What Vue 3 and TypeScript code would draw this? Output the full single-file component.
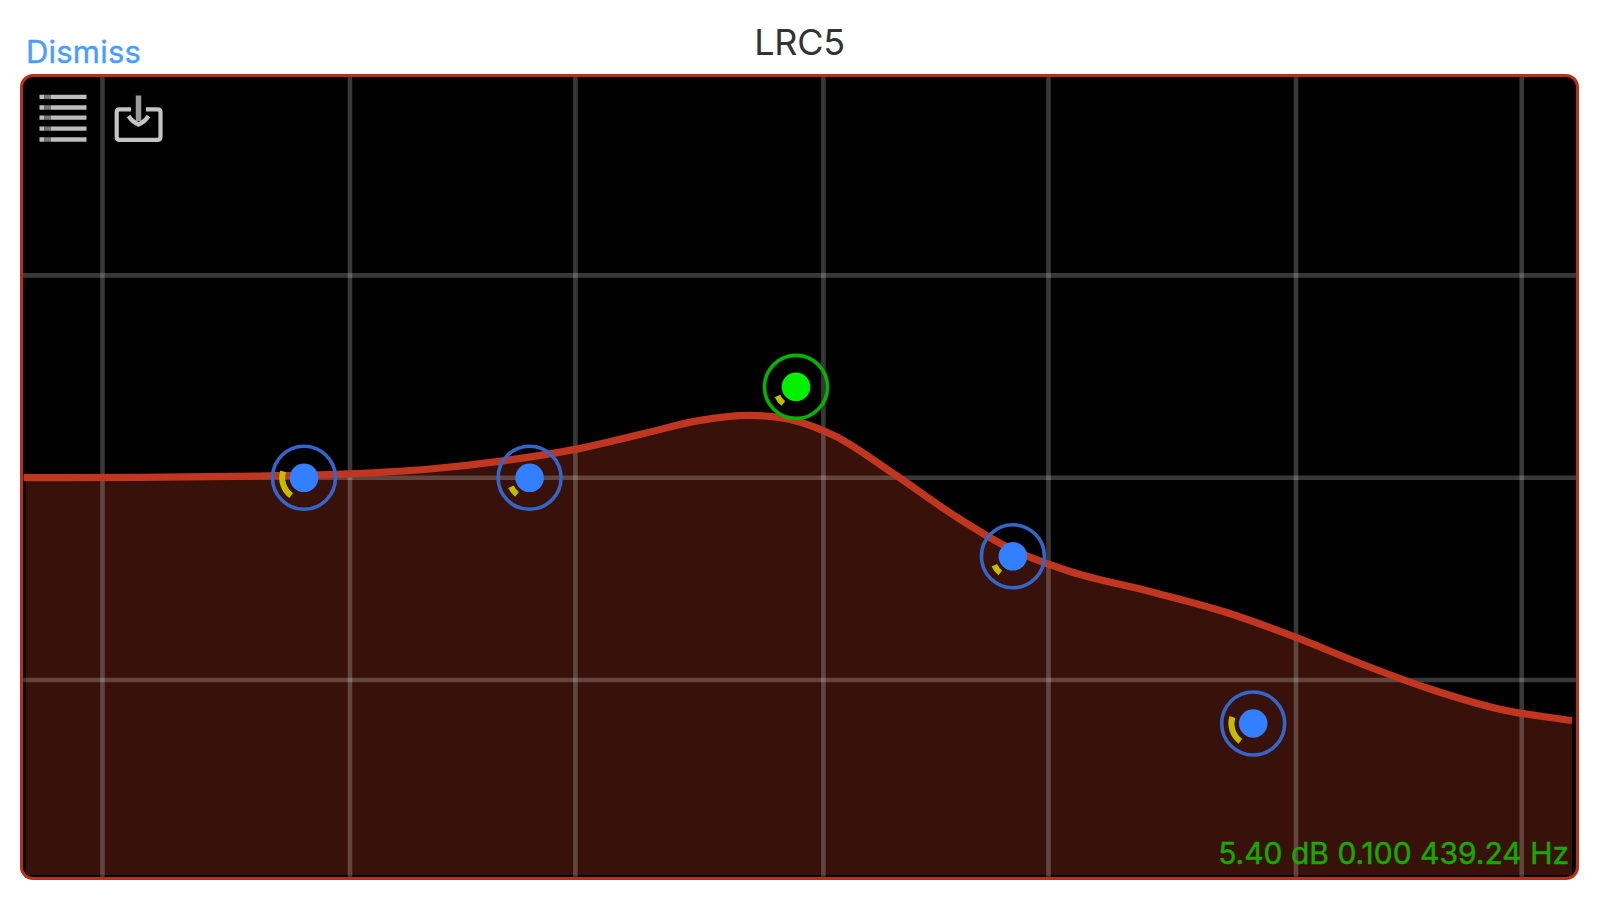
<script setup lang="ts">
type Point = [number, number]

interface Band {
  x: number
  y: number
  active: boolean
  wide: boolean
}

const verticals: number[] = [102.5, 350, 575.4, 823.4, 1048.5, 1296, 1521.7]
const horizontals: number[] = [275.4, 477.8, 680]

const response: Point[] = [
  [24, 477.6], [140, 477.4], [260, 476], [350, 473.8], [430, 469],
  [505, 460.6], [575, 449.4], [645, 433.2], [700, 420.4], [750, 415.4],
  [790, 419.4], [835, 436], [893, 473.3], [955, 516], [1010, 548.5],
  [1070, 571.5], [1150, 591.5], [1225, 612], [1296, 637.4], [1363, 664.5],
  [1430, 689], [1500, 709.2], [1572, 720.8],
]

const bands: Band[] = [
  { x: 304, y: 477.8, active: false, wide: true },
  { x: 529.6, y: 477.8, active: false, wide: false },
  { x: 796, y: 386.9, active: true, wide: false },
  { x: 1012.9, y: 556.3, active: false, wide: false },
  { x: 1253.2, y: 723.5, active: false, wide: true },
]

// Cubic spline through the response samples, slopes weighted by sample spacing
function spline(p: Point[]): string {
  const last = p.length - 1
  const secant = (i: number): number => (p[i + 1][1] - p[i][1]) / (p[i + 1][0] - p[i][0])
  const slope = (i: number): number => {
    if (i === 0) return secant(0)
    if (i === last) return secant(last - 1)
    const before = p[i][0] - p[i - 1][0]
    const after = p[i + 1][0] - p[i][0]
    return (secant(i - 1) * after + secant(i) * before) / (before + after)
  }
  let d = `M${p[0][0]} ${p[0][1]}`
  for (let i = 0; i < last; i++) {
    const b = p[i]
    const c = p[i + 1]
    const h = (c[0] - b[0]) / 3
    d += `C${b[0] + h} ${b[1] + h * slope(i)} ${c[0] - h} ${c[1] - h * slope(i + 1)} ${c[0]} ${c[1]}`
  }
  return d
}

const curve = spline(response)
const area = `${curve}V875H26V477Z`
</script>

<template>
  <main class="screen">
    <header class="bar">
      <span class="dismiss">Dismiss</span>
      <h1 class="title">LRC5</h1>
    </header>
    <section class="panel">
      <svg class="plot" viewBox="23 77 1553 800" preserveAspectRatio="none">
        <path class="area" :d="area" />
        <g class="grid">
          <line v-for="x in verticals" :key="x" :x1="x" :x2="x" y1="77" y2="877" />
          <line v-for="y in horizontals" :key="y" :y1="y" :y2="y" x1="23" x2="1576" />
        </g>
        <path class="curve" :d="curve" />
        <g
          v-for="b in bands"
          :key="b.x"
          :class="['band', { active: b.active }]"
          :transform="`translate(${b.x} ${b.y})`"
        >
          <circle class="ring" r="31.5" />
          <path class="q" :d="b.wide ? 'M-20.8-6.5A21.8 21.8 0 0 0-12.8 17.7' : 'M-18.6 9A20.6 20.6 0 0 0-12.6 16.600'" />
          <circle class="dot" r="14.3" />
        </g>
        <g class="list">
          <g v-for="y in [96.9, 107.5, 117.6, 128.6, 139.5]" :key="y">
            <line x1="39.5" x2="44.5" :y1="y" :y2="y" />
            <line class="dim" x1="44.5" x2="51" :y1="y" :y2="y" />
            <line x1="51" x2="86.5" :y1="y" :y2="y" />
          </g>
        </g>
        <g class="save">
          <path d="M131 109.300H119.5Q116.7 109.300 116.7 112.300V137Q116.7 139.900 119.5 139.900H157.500Q160.500 139.900 160.500 137V112.300Q160.500 109.300 157.500 109.300H146" />
          <path class="stem" d="M138.500 95.500V121" />
          <path d="M128.500 116Q132 121.500 138.500 124.500Q145 121.500 148.500 116" />
        </g>
      </svg>
      <div class="readout">5.40 dB 0.100 439.24 Hz</div>
    </section>
  </main>
</template>

<style>
body {
  margin: 0;
  background: #fff;
  overflow: hidden;
}
</style>

<style scoped>
.screen {
  box-sizing: border-box;
  width: 1599px;
  height: 900px;
  padding: 0 20px 20px;
  display: flex;
  flex-direction: column;
  background: #fff;
  font-family: Inter, "Liberation Sans", sans-serif;
}
.bar {
  height: 74px;
  flex: none;
  display: grid;
  grid-template-columns: 1fr auto 1fr;
  white-space: nowrap;
}
.dismiss {
  padding: 32px 0 0 6px;
  font-size: 31px;
  line-height: 40px;
  letter-spacing: 0.2px;
  color: #4a9cff;
  -webkit-text-stroke: 0.4px #4a9cff;
}
.title {
  margin: 0;
  padding-top: 20px;
  font-size: 36px;
  line-height: 44px;
  font-weight: 400;
  letter-spacing: -0.3px;
  color: #333;
}
.panel {
  position: relative;
  box-sizing: border-box;
  flex: 1;
  min-height: 0;
  border: 3px solid #b92f1c;
  border-radius: 13px;
  background: #000;
  overflow: hidden;
}
.plot {
  display: block;
  width: 100%;
  height: 100%;
}
.area {
  fill: #38110a;
}
.grid {
  stroke: #fff;
  stroke-opacity: 0.22;
  stroke-width: 4.600;
}
.curve {
  fill: none;
  stroke: #c03620;
  stroke-width: 7.200;
}
.ring {
  fill: none;
  stroke: #3465c8;
  stroke-width: 3.600;
}
.dot {
  fill: #327fff;
}
.active .ring {
  stroke: #00b400;
}
.active .dot {
  fill: #00f000;
}
.q {
  fill: none;
  stroke: #c2bd00;
  stroke-width: 6;
}
.list {
  stroke: #bdbdbd;
  stroke-width: 4.400;
}
.list .dim {
  stroke: #777;
}
.save {
  fill: none;
  stroke: #c4c4c4;
  stroke-width: 4.200;
}
.save .stem {
  stroke: #999;
  stroke-width: 5.500;
}
.readout {
  position: absolute;
  right: 7px;
  bottom: 4px;
  font-size: 30px;
  line-height: 40px;
  color: #18a800;
  -webkit-text-stroke: 0.5px #18a800;
  white-space: nowrap;
}
</style>
